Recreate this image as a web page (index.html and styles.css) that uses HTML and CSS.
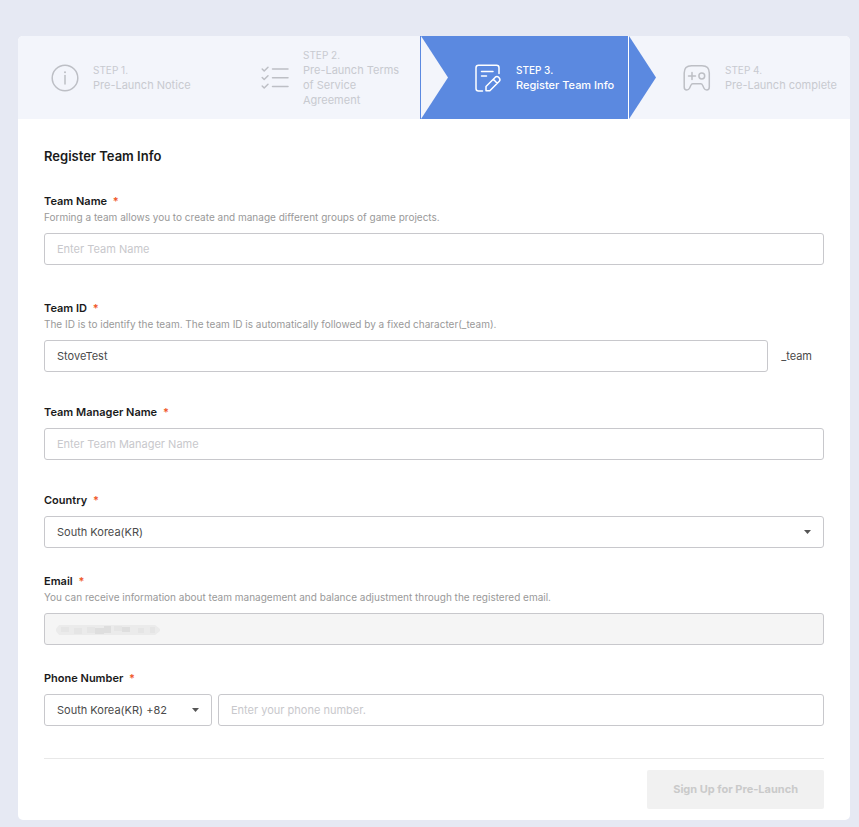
FILE: index.html
```html
<!DOCTYPE html>
<html lang="en">
<head>
<meta charset="utf-8">
<meta name="viewport" content="width=device-width, initial-scale=1">
<title>Register Team Info</title>
<link rel="stylesheet" href="styles.css">
</head>
<body>
<main class="card">
  <ol class="steps">
    <li class="step">
      <svg class="step-icon" viewBox="0 0 28 28" aria-hidden="true">
        <circle cx="14" cy="14" r="12.8"/>
        <path d="M14 11.5V20"/>
        <circle class="dot" cx="14" cy="8.2" r="1"/>
      </svg>
      <div class="step-text"><span class="step-no">STEP 1.</span><span class="step-name">Pre-Launch Notice</span></div>
    </li>
    <li class="step">
      <svg class="step-icon" viewBox="0 0 28 28" aria-hidden="true">
        <path d="M1.2 5l2 2L7 3.200M1.200 13.500l2 2L7 11.700M1.200 22l2 2L7 20.200M11.500 5H27M11.500 13.800H27M11.500 22.500H27"/>
      </svg>
      <div class="step-text"><span class="step-no">STEP 2.</span><span class="step-name">Pre-Launch Terms of Service Agreement</span></div>
    </li>
    <li class="step step-active" aria-current="step">
      <svg class="step-icon" viewBox="0 0 28 28" aria-hidden="true">
        <path d="M8.500 27H4.500Q2 27 2 24.500V3.800Q2 1.300 4.500 1.300H22.500Q25 1.300 25 3.800V9.500"/>
        <path d="M7.500 7.500H19M7.500 12H12.500"/>
        <path d="M12 22.500L21.300 13.200Q23 11.800 24.900 13.500Q26.800 15.500 25.300 17.300L15.800 26.800H12ZM19.300 15.200L23.200 19.200"/>
      </svg>
      <div class="step-text"><span class="step-no">STEP 3.</span><span class="step-name">Register Team Info</span></div>
    </li>
    <li class="step">
      <svg class="step-icon" viewBox="0 0 28 28" aria-hidden="true">
        <path d="M8.500 1.800H19Q26.300 1.800 26.300 9V23Q26.300 26 23.700 26Q21.800 26 21 24.300L19.500 21Q19 19.800 17.800 19.800H9.700Q8.500 19.800 8 21L6.500 24.300Q5.700 26 3.800 26Q1.200 26 1.200 23V9Q1.200 1.800 8.500 1.800Z"/>
        <path d="M9 8.500V15.500M5.500 12H12.500"/>
        <circle cx="18.800" cy="12" r="2.900"/>
      </svg>
      <div class="step-text"><span class="step-no">STEP 4.</span><span class="step-name">Pre-Launch complete</span></div>
    </li>
  </ol>

  <form class="form">
    <h1 class="title">Register Team Info</h1>

    <div class="field field-wide">
      <label class="label" for="team-name">Team Name <span class="required">*</span></label>
      <p class="hint">Forming a team allows you to create and manage different groups of game projects.</p>
      <input class="control" id="team-name" type="text" placeholder="Enter Team Name">
    </div>

    <div class="field">
      <label class="label" for="team-id">Team ID <span class="required">*</span></label>
      <p class="hint">The ID is to identify the team. The team ID is automatically followed by a fixed character(_team).</p>
      <div class="row">
        <input class="control" id="team-id" type="text" value="StoveTest">
        <span class="suffix">_team</span>
      </div>
    </div>

    <div class="field">
      <label class="label" for="manager">Team Manager Name <span class="required">*</span></label>
      <input class="control" id="manager" type="text" placeholder="Enter Team Manager Name">
    </div>

    <div class="field field-tight">
      <label class="label" for="country">Country <span class="required">*</span></label>
      <div class="select">
        <select class="control" id="country"><option>South Korea(KR)</option></select>
      </div>
    </div>

    <div class="field field-tight">
      <label class="label" for="email">Email <span class="required">*</span></label>
      <p class="hint">You can receive information about team management and balance adjustment through the registered email.</p>
      <div class="masked">
        <input class="control" id="email" type="email" disabled>
        <svg class="mask" viewBox="0 0 104 10" aria-hidden="true">
          <path fill="#ebebeb" d="M3 0H99L104 4V6L99 10H3L0 6V4Z"/>
          <path fill="#e5e5e5" d="M5 2H13V7H5ZM18 3H26V9H18ZM31 2H39V8H31ZM58 1H66V6H58ZM82 3H88V8H82ZM94 2H99V8H94Z"/>
          <path fill="#dedede" d="M39 3H48V9H39ZM48 1H55V8H48ZM66 2H74V7H66Z"/>
        </svg>
      </div>
    </div>

    <div class="field">
      <label class="label" for="phone">Phone Number <span class="required">*</span></label>
      <div class="row row-phone">
        <div class="select select-code">
          <select class="control" aria-label="Country code"><option>South Korea(KR) +82</option></select>
        </div>
        <input class="control" id="phone" type="tel" placeholder="Enter your phone number.">
      </div>
    </div>

    <div class="actions">
      <button class="submit" type="submit" disabled>Sign Up for Pre-Launch</button>
    </div>
  </form>
</main>
</body>
</html>
```
FILE: styles.css
```css
* {
  box-sizing: border-box;
}

body {
  margin: 0;
  padding: 36px 9px 7px 18px;
  background: #e6e9f3;
  color: #1a1a1a;
  font-family: Inter, "Liberation Sans", sans-serif;
  font-size: 11px;
  line-height: 16px;
}

.card {
  background: #fff;
  border-radius: 5px;
}

/* Step bar */
.steps {
  display: grid;
  grid-template-columns: 189fr 213fr 209fr 221fr;
  min-height: 83px;
  margin: 0;
  padding: 0;
  list-style: none;
  background: #f3f5fb;
  border-radius: 5px 5px 0 0;
}

.step {
  position: relative;
  display: flex;
  align-items: center;
  gap: 14px;
  padding: 0 8px 0 54px;
  color: #c8cad0;
}

.step:first-child {
  padding-left: 33px;
}

.step:last-child {
  padding-right: 0;
}

.step-icon {
  flex: none;
  width: 28px;
  height: 28px;
  fill: none;
  stroke: #bdbfc5;
  stroke-width: 1.5;
  stroke-linecap: round;
  stroke-linejoin: round;
}

.step-icon .dot {
  fill: #bdbfc5;
  stroke: none;
}

.step-text {
  display: flex;
  flex-direction: column;
  line-height: 15px;
}

.step-no {
  font-size: 10px;
}

.step-active {
  background: #5b89e0;
  border-right: 1px solid #fff;
  color: #fff;
  font-weight: 500;
}

.step-active .step-icon {
  stroke: #fff;
}

.step-active::before,
.step-active::after {
  content: "";
  position: absolute;
  top: 0;
  bottom: 0;
  width: 27px;
  clip-path: polygon(0 0, 100% 50%, 0 100%);
}

.step-active::before {
  left: 1px;
  background: #f3f5fb;
}

.step-active::after {
  left: calc(100% + 1px);
  background: #5b89e0;
}

/* Form */
.form {
  padding: 29px 26px 11px;
}

.title {
  margin: 0 0 29px;
  font-size: 13px;
  font-weight: 600;
  line-height: 16px;
}

.field {
  margin-bottom: 32px;
}

.field-wide {
  margin-bottom: 35px;
}

.field-tight {
  margin-bottom: 25px;
}

.label {
  display: block;
  margin-bottom: 8px;
  font-weight: 600;
}

.label:has(+ .hint) {
  margin-bottom: 0;
}

.required {
  margin-left: 3px;
  color: #f0592a;
}

.hint {
  margin: 0 0 8px;
  color: #999;
  font-size: 10px;
}

.control {
  display: block;
  width: 100%;
  height: 32px;
  margin: 0;
  padding: 0 12px;
  border: 1px solid #c8c8cc;
  border-radius: 3px;
  background: #fff;
  color: #4a4a4a;
  font: inherit;
  appearance: none;
}

.control::placeholder {
  color: #c8c8cc;
  opacity: 1;
}

.control:disabled {
  background: #f5f5f5;
}

.row {
  display: flex;
  align-items: center;
}

.row .control {
  flex: 1;
  min-width: 0;
}

.row-phone {
  gap: 6px;
}

.suffix {
  padding: 0 12px 0 13px;
  color: #4a4a4a;
}

.select {
  position: relative;
}

.select::after {
  content: "";
  position: absolute;
  top: 14px;
  right: 13px;
  width: 7px;
  height: 4px;
  background: #555;
  clip-path: polygon(0 0, 100% 0, 50% 100%);
  pointer-events: none;
}

.select-code {
  flex: none;
  width: 168px;
}

.masked {
  position: relative;
}

.mask {
  position: absolute;
  top: 12px;
  left: 12px;
  width: 104px;
  height: 10px;
}

.actions {
  display: flex;
  justify-content: flex-end;
  padding-top: 11px;
  border-top: 1px solid #e8e8e8;
}

.submit {
  padding: 12px 26px;
  border: 0;
  border-radius: 2px;
  background: #f1f1f1;
  color: #cacaca;
  font: inherit;
  font-weight: 700;
  line-height: 15px;
}
```
